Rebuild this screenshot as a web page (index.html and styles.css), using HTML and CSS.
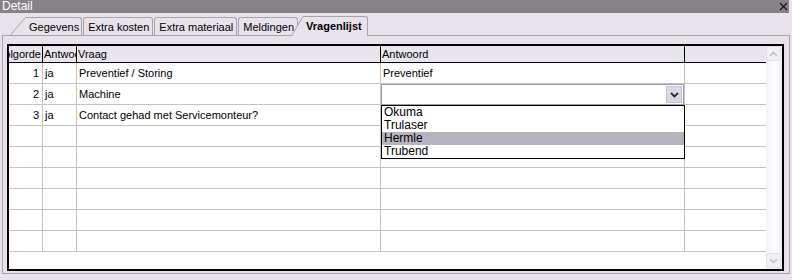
FILE: index.html
```html
<!DOCTYPE html>
<html lang="nl">
<head>
    <meta charset="UTF-8">
    <title>Detail - Vragenlijst</title>
    <link rel="stylesheet" href="styles.css">
</head>
<body>
    <div class="window">
        <div class="titlebar">
            <span>Detail</span>
            <svg class="close" width="9" height="9" viewBox="0 0 9 9">
                <path d="M1 1 L8 8 M8 1 L1 8" stroke="#111" stroke-width="1.1" fill="none"/>
            </svg>
        </div>

        <div class="tabs">
            <svg class="slant-first" width="17" height="18" viewBox="0 0 17 18">
                <path d="M0.5 18 L14 2 Q15 0.5 17 0.5" stroke="#a8a4ac" fill="none"/>
            </svg>
            <div class="tab first">Gegevens</div>
            <div class="tab">Extra kosten</div>
            <div class="tab">Extra materiaal</div>
            <div class="tab">Meldingen</div>
            <div class="tab-active">
                <svg class="slant-active" width="13" height="20" viewBox="0 0 13 20">
                    <path d="M0 20 L11 2 Q12 0.5 13 0.5 L13 20 Z" fill="#e8e3ea"/>
                    <path d="M0.5 20 L11 2 Q12 0.5 13 0.5" stroke="#a8a4ac" fill="none"/>
                </svg>
                <div class="tab active">Vragenlijst</div>
            </div>
        </div>

        <div class="panel">
            <div class="grid">
                <div class="table">
                    <div class="row head">
                        <div class="c c1 right">Volgorde</div>
                        <div class="c c2">Antwoord</div>
                        <div class="c c3">Vraag</div>
                        <div class="c c4">Antwoord</div>
                        <div class="c c5"></div>
                    </div>
                    <div class="row">
                        <div class="c c1 right">1</div>
                        <div class="c c2">ja</div>
                        <div class="c c3">Preventief / Storing</div>
                        <div class="c c4">Preventief</div>
                        <div class="c c5"></div>
                    </div>
                    <div class="row">
                        <div class="c c1 right">2</div>
                        <div class="c c2">ja</div>
                        <div class="c c3">Machine</div>
                        <div class="c c4 editing">
                            <div class="combo">
                                <span class="combo-value"></span>
                                <span class="combo-btn">
                                    <svg width="9" height="6" viewBox="0 0 9 6">
                                        <path d="M1 1 L4.5 4.5 L8 1" stroke="#2a2a38" stroke-width="1.8" fill="none"/>
                                    </svg>
                                </span>
                            </div>
                            <ul class="droplist">
                                <li>Okuma</li>
                                <li>Trulaser</li>
                                <li class="selected">Hermle</li>
                                <li>Trubend</li>
                            </ul>
                        </div>
                        <div class="c c5"></div>
                    </div>
                    <div class="row">
                        <div class="c c1 right">3</div>
                        <div class="c c2">ja</div>
                        <div class="c c3">Contact gehad met Servicemonteur?</div>
                        <div class="c c4"></div>
                        <div class="c c5"></div>
                    </div>
                    <div class="row"><div class="c c1"></div><div class="c c2"></div><div class="c c3"></div><div class="c c4"></div><div class="c c5"></div></div>
                    <div class="row"><div class="c c1"></div><div class="c c2"></div><div class="c c3"></div><div class="c c4"></div><div class="c c5"></div></div>
                    <div class="row"><div class="c c1"></div><div class="c c2"></div><div class="c c3"></div><div class="c c4"></div><div class="c c5"></div></div>
                    <div class="row"><div class="c c1"></div><div class="c c2"></div><div class="c c3"></div><div class="c c4"></div><div class="c c5"></div></div>
                    <div class="row"><div class="c c1"></div><div class="c c2"></div><div class="c c3"></div><div class="c c4"></div><div class="c c5"></div></div>
                    <div class="row"><div class="c c1"></div><div class="c c2"></div><div class="c c3"></div><div class="c c4"></div><div class="c c5"></div></div>
                </div>
                <div class="scrollbar">
                    <div class="sb-btn">
                        <svg width="9" height="6" viewBox="0 0 9 6">
                            <path d="M1 5 L4.5 1.5 L8 5" stroke="#c4c0c8" stroke-width="1.6" fill="none"/>
                        </svg>
                    </div>
                    <div class="sb-btn">
                        <svg width="9" height="6" viewBox="0 0 9 6">
                            <path d="M1 1 L4.5 4.5 L8 1" stroke="#c4c0c8" stroke-width="1.6" fill="none"/>
                        </svg>
                    </div>
                </div>
            </div>
        </div>
    </div>
</body>
</html>
```

FILE: styles.css
```css
body {
    margin: 0;
    padding: 0;
    background-color: #e8e3ea;
    font-family: 'Liberation Sans', Arial, sans-serif;
    font-size: 11px;
    color: #000;
}

.window {
    width: 792px;
    height: 280px;
    overflow: hidden;
}

/* title bar */
.titlebar {
    height: 13px;
    margin-right: 3px;
    padding-left: 2px;
    background-color: #858186;
    color: #fff;
    font-size: 12px;
    line-height: 13px;
    display: flex;
    justify-content: space-between;
    align-items: center;
}

.close {
    margin-right: 1px;
}

/* tabs */
.tabs {
    height: 22px;
    padding-left: 10px;
    display: flex;
    align-items: flex-end;
}

.slant-first {
    display: block;
}

.tab {
    box-sizing: border-box;
    height: 18px;
    padding: 0 3px 0 4px;
    border: 1px solid #a8a4ac;
    border-bottom: none;
    border-radius: 3px 3px 0 0;
    margin-right: 1px;
    display: flex;
    align-items: center;
    white-space: nowrap;
}

.tab.first {
    border-left: none;
    border-top-left-radius: 0;
    padding-left: 2px;
    padding-right: 2px;
}

.tab-active {
    position: relative;
    z-index: 1;
    display: flex;
    align-items: flex-end;
    margin-left: -8px;
    margin-bottom: -1px;
}

.slant-active {
    display: block;
}

.tab.active {
    height: 20px;
    border-left: none;
    border-top-left-radius: 0;
    padding: 0 5px 1px 2px;
    background-color: #e8e3ea;
    font-weight: bold;
}

/* panel with grid */
.panel {
    margin: 0 2px 0 2px;
    border: 1px solid #a8a4ac;
    padding: 8px 5px 2px 4px;
}

.grid {
    box-sizing: border-box;
    height: 227px;
    border: 2px solid #000;
    background-color: #fff;
    display: flex;
}

.table {
    width: 757px;
    overflow: hidden;
}

.row {
    box-sizing: border-box;
    height: 21px;
    border-bottom: 1px solid #c4c4c4;
    display: flex;
}

.row.head {
    height: 17px;
    border-bottom: 1px solid #000;
    background-color: #e9e5ed;
}

.c {
    box-sizing: border-box;
    border-right: 1px solid #c4c4c4;
    padding: 0 2px;
    overflow: hidden;
    white-space: nowrap;
    display: flex;
    align-items: center;
}

.head .c {
    border-right-color: #000;
    padding-left: 1px;
}

.c1 { width: 34px; }
.c2 { width: 34px; }
.c3 { width: 304px; }
.c4 { width: 304px; }
.c5 { width: 81px; border-right: none; }

.head .c5 {
    border-right: none;
}

.c.right {
    justify-content: flex-end;
    padding-right: 3px;
}

.head .c.right {
    padding-right: 1px;
}

/* dropdown editor */
.c4.editing {
    position: relative;
    overflow: visible;
    z-index: 2;
}

.combo {
    position: absolute;
    top: 0;
    left: 0;
    box-sizing: border-box;
    width: 303px;
    height: 21px;
    border: 1px solid #9c9cac;
    background-color: #fff;
    display: flex;
    justify-content: flex-end;
    align-items: center;
    padding-right: 1px;
}

.combo-btn {
    box-sizing: border-box;
    width: 16px;
    height: 17px;
    background-color: #d9d9e4;
    border: 1px solid #c4c4d0;
    display: flex;
    align-items: center;
    justify-content: center;
}

.droplist {
    position: absolute;
    top: 21px;
    left: 0;
    box-sizing: border-box;
    width: 304px;
    margin: 0;
    padding: 0;
    list-style: none;
    border: 1px solid #000;
    background-color: #fff;
}

.droplist li {
    height: 13px;
    line-height: 13px;
    padding-left: 2px;
    font-size: 12px;
}

.droplist li.selected {
    background-color: #b5b5bd;
}

/* scrollbar */
.scrollbar {
    width: 16px;
    background: linear-gradient(to right, #f4f2f6, #fdfdfe 60%, #efedf2);
    display: flex;
    flex-direction: column;
    justify-content: space-between;
    padding-bottom: 1px;
    box-sizing: border-box;
}

.sb-btn {
    box-sizing: border-box;
    width: 15px;
    height: 15px;
    border: 1px solid #e2dfe6;
    border-radius: 2px;
    background-color: #f1eff4;
    display: flex;
    align-items: center;
    justify-content: center;
}
```
